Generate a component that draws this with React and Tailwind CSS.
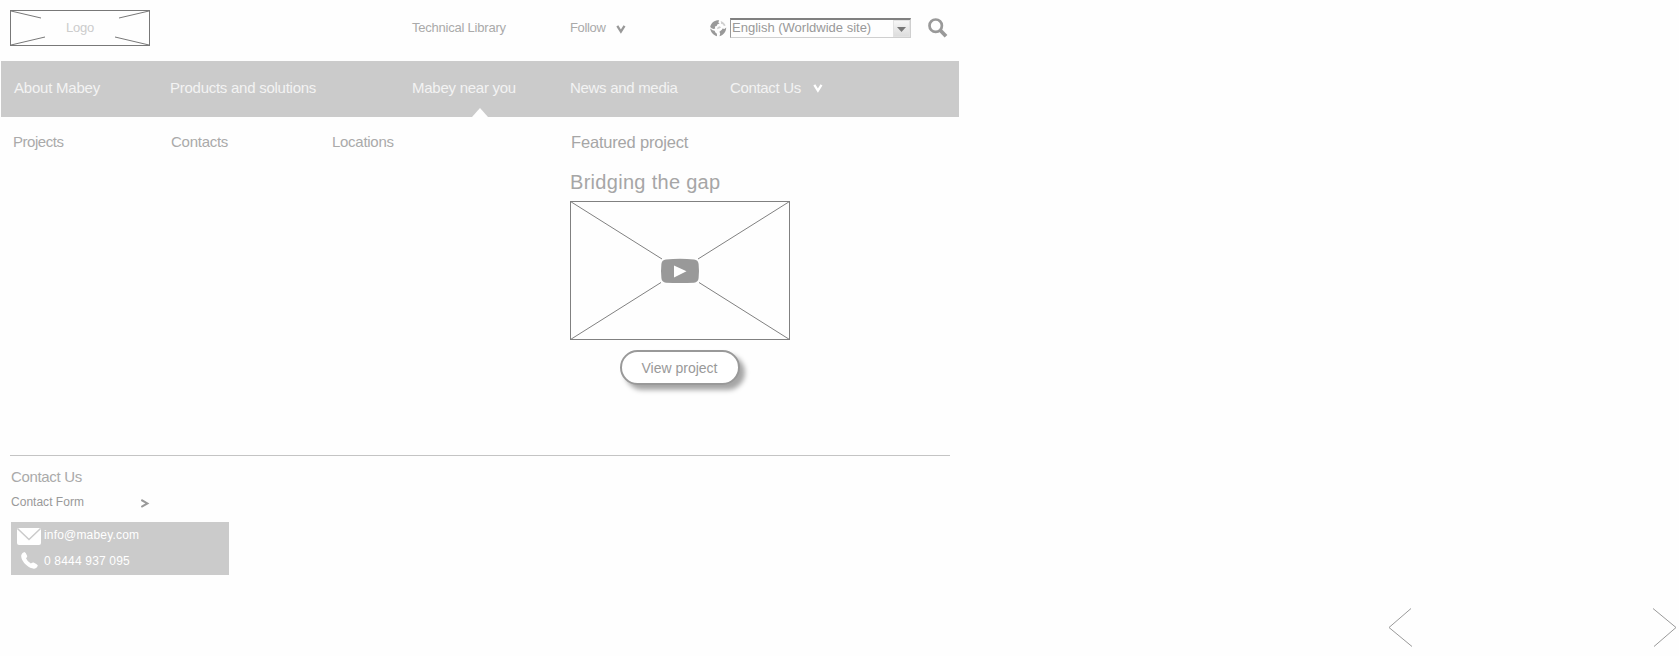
import React from 'react';

function LogoPlaceholder() {
  return (
    <div className="grid h-9 w-[140px] place-items-center">
      <svg className="col-start-1 row-start-1" width="140" height="36" viewBox="0 0 140 36" fill="none" stroke="#787878">
        <rect x="0.5" y="0.5" width="139" height="35" />
        <path d="M1 1L31 8M139 1L109 8M1 35L35 27M139 35L105 27" />
      </svg>
      <span className="col-start-1 row-start-1 text-[13px] leading-4 tracking-[-0.2px] text-[#cccccc]">Logo</span>
    </div>
  );
}

function Chevron({ className }) {
  return (
    <svg className={className} width="10" height="9" viewBox="0 0 10 9" fill="none" stroke="currentColor" strokeWidth="2.3">
      <path d="M1.3 0.8L4.9 6.6L8.5 0.8" />
    </svg>
  );
}

function Globe() {
  return (
    <svg width="17" height="17" viewBox="0 0 17 17" fill="#999">
      <path d="M9.2 0.3C4.8 0 1.1 2.8 0.2 6.9L1.5 8.2L3.6 9L5.2 8.6L4.9 6.6L6.6 5.9L7.5 4.2L9.6 3.4L8.3 2.4Z" />
      <path d="M0.2 8.6C0.6 12.2 3.3 15.4 7 16.2L6.9 13.8L5.4 12.6L4.6 10.8L2.6 10.3Z" />
      <path d="M10.7 0.9C13 1.7 14.7 3.3 15.6 5.4L13.9 6L12.9 4.3L11.2 4.1L11 2.4Z" fill="#cfcfcf" />
      <path d="M16.2 7.4C16.2 11.6 13.6 14.9 9.5 16.2L10.2 13.6L9.4 11.7L11.9 9.8L12.5 8.4L14.4 8.9Z" />
      <path d="M7 9.2L7.6 7.2L9.4 6.2L11.2 7.2L9.8 8.2Z" fill="#cfcfcf" />
    </svg>
  );
}

function LanguageSelect() {
  return (
    <div className="flex h-5 w-[181px] border border-t-2 border-[#cfcfcf] border-t-[#808080] border-l-[#999]">
      <span className="flex-1 pl-px text-[13px] leading-[15px] whitespace-nowrap text-[#999]">English (Worldwide site)</span>
      <span className="flex w-[17px] items-center justify-center border border-[#e2e2e2] bg-linear-to-b from-[#f6f6f6] to-[#dddddd] pt-0.5">
        <svg width="9" height="5" viewBox="0 0 9 5" fill="#777"><path d="M0 0H9L4.5 5Z" /></svg>
      </span>
    </div>
  );
}

function Header() {
  return (
    <header className="flex h-14 items-center pl-2.5 text-[13px] leading-4 text-[#aaaaaa]">
      <LogoPlaceholder />
      <span className="ml-[262px] w-[158px] pb-px tracking-[-0.22px] whitespace-nowrap">Technical Library</span>
      <span className="w-[46px] pb-px tracking-[-0.34px]">Follow</span>
      <Chevron className="mt-0.5 text-[#999]" />
      <span className="ml-[84px] w-5"><Globe /></span>
      <LanguageSelect />
      <svg className="ml-[17px]" width="20" height="20" viewBox="0 0 20 20" fill="none" stroke="#999">
        <circle cx="7.7" cy="7.7" r="6.2" strokeWidth="2.7" />
        <path d="M12 12L18 18.3" strokeWidth="3.8" />
      </svg>
    </header>
  );
}

function Nav() {
  return (
    <nav className="mt-[5px] ml-px grid h-14 w-[958px] grid-cols-[156px_242px_158px_160px_1fr] bg-[#cbcbcb] pl-[13px] text-[15px] leading-[54px] whitespace-nowrap text-[#f3f3f3]">
      <a className="tracking-[-0.22px]">About Mabey</a>
      <a className="tracking-[-0.26px]">Products and solutions</a>
      <a className="flex flex-col tracking-[-0.26px]">
        <span className="h-[47px]">Mabey near you</span>
        <svg className="ml-[60px]" width="16" height="9" viewBox="0 0 16 9" fill="#fefefe"><path d="M0 9L8 0L16 9Z" /></svg>
      </a>
      <a className="tracking-[-0.3px]">News and media</a>
      <a className="flex tracking-[-0.34px]">
        <span className="w-[83px]">Contact Us</span>
        <Chevron className="mt-[23px] text-white" />
      </a>
    </nav>
  );
}

function Featured() {
  return (
    <section className="w-[220px]">
      <h2 className="pl-px text-[16.5px] leading-5 tracking-[-0.18px] whitespace-nowrap text-[#a6a6a6]">Featured project</h2>
      <h3 className="mt-[18px] text-[20px] leading-6 tracking-[0.3px] whitespace-nowrap text-[#a6a6a6]">Bridging the gap</h3>
      <svg className="mt-[7px] block" width="220" height="139" viewBox="0 0 220 139" fill="none" stroke="#808080">
        <rect x="0.5" y="0.5" width="219" height="138" />
        <path d="M0.5 0.5L92 58M219.5 0.5L128 58M0.5 138.5L91 81.5M219.5 138.5L129 81.5" />
        <path stroke="none" fill="#999" d="M96 58.4Q110 57.2 124 58.4Q128.2 58.8 128.6 63Q129.4 70 128.6 77Q128.2 81.4 124 81.7Q110 82.5 96 81.7Q91.8 81.4 91.4 77Q90.6 70 91.4 63Q91.8 58.8 96 58.4Z" />
        <path stroke="none" fill="#fff" d="M104 64.5V76.5L116.5 70.3Z" />
      </svg>
      <button className="mt-2.5 ml-[50px] block h-[35px] w-[120px] rounded-full border-2 border-[#999] bg-white pr-px text-[14px] leading-[33px] text-[#999] shadow-[5px_5px_5px_rgba(0,0,0,0.35)]">View project</button>
    </section>
  );
}

function Menu() {
  return (
    <div className="grid h-[338px] grid-cols-[158px_161px_238px_1fr] pt-[15px] pl-[13px] text-[15px] leading-5 text-[#aaaaaa]">
      <a className="tracking-[-0.45px]">Projects</a>
      <a className="tracking-[-0.26px]">Contacts</a>
      <a className="tracking-[-0.28px]">Locations</a>
      <Featured />
    </div>
  );
}

function Footer() {
  return (
    <footer className="ml-2.5 w-[940px] border-t border-[#c4c4c4] pt-[11px] pl-px">
      <h4 className="text-[15px] leading-5 tracking-[-0.34px] text-[#aaaaaa]">Contact Us</h4>
      <a className="mt-[7px] flex h-4 items-center text-[12px] leading-4 tracking-[0.02px] text-[#999]">
        <span className="w-[130px]">Contact Form</span>
        <svg className="mt-0.5" width="9" height="9" viewBox="0 0 9 9" fill="none" stroke="#999" strokeWidth="2"><path d="M0.3 0.9L6.4 4.4L0.3 7.9" /></svg>
      </a>
      <div className="mt-3 h-[53px] w-[218px] bg-[#cbcbcb] text-[12px] leading-[26px] tracking-[0.18px] text-white">
        <div className="flex h-[26px]">
          <svg className="mt-1.5 mr-[3px] ml-1.5" width="24" height="17" viewBox="0 0 24 17" fill="#fff">
            <rect width="24" height="17" rx="2" />
            <path d="M0.7 0.7L12 11.5L23.3 0.7" fill="none" stroke="#cbcbcb" strokeWidth="1.5" />
          </svg>
          <span>info@mabey.com</span>
        </div>
        <div className="flex h-[26px]">
          <svg className="mt-1 mr-1.5 ml-2.5" width="17" height="17" viewBox="0 0 17 17" fill="#fff">
            <path d="M0.3 3Q1.2 0.6 3.4 0.1Q4.6 0.3 6.2 4Q6.4 5.1 5 6.3Q6.2 9.4 9.9 11.6Q11.5 10.3 12.6 10.6Q15.9 12.1 16.8 13.2Q16.6 15.4 14.2 16.5Q10.2 17.4 5 12.8Q-0.5 7.4 0.3 3Z" />
          </svg>
          <span>0 8444 937 095</span>
        </div>
      </div>
    </footer>
  );
}

function Pager() {
  return (
    <div className="mt-[33px] flex justify-between pr-0.5 pl-[1388px]">
      <svg width="25" height="39" viewBox="0 0 25 39" fill="none" stroke="#999"><path d="M23 0.5L1 19.5L24 38.5" /></svg>
      <svg width="25" height="39" viewBox="0 0 25 39" fill="none" stroke="#999"><path d="M1 0.5L24 19.5L2 38.5" /></svg>
    </div>
  );
}

export default function App() {
  return (
    <main className="h-[656px] w-[1679px] overflow-hidden bg-[#fefefe] font-['Liberation_Sans',Arial,sans-serif]">
      <div className="w-[960px]">
        <Header />
        <Nav />
        <Menu />
        <Footer />
      </div>
      <Pager />
    </main>
  );
}
